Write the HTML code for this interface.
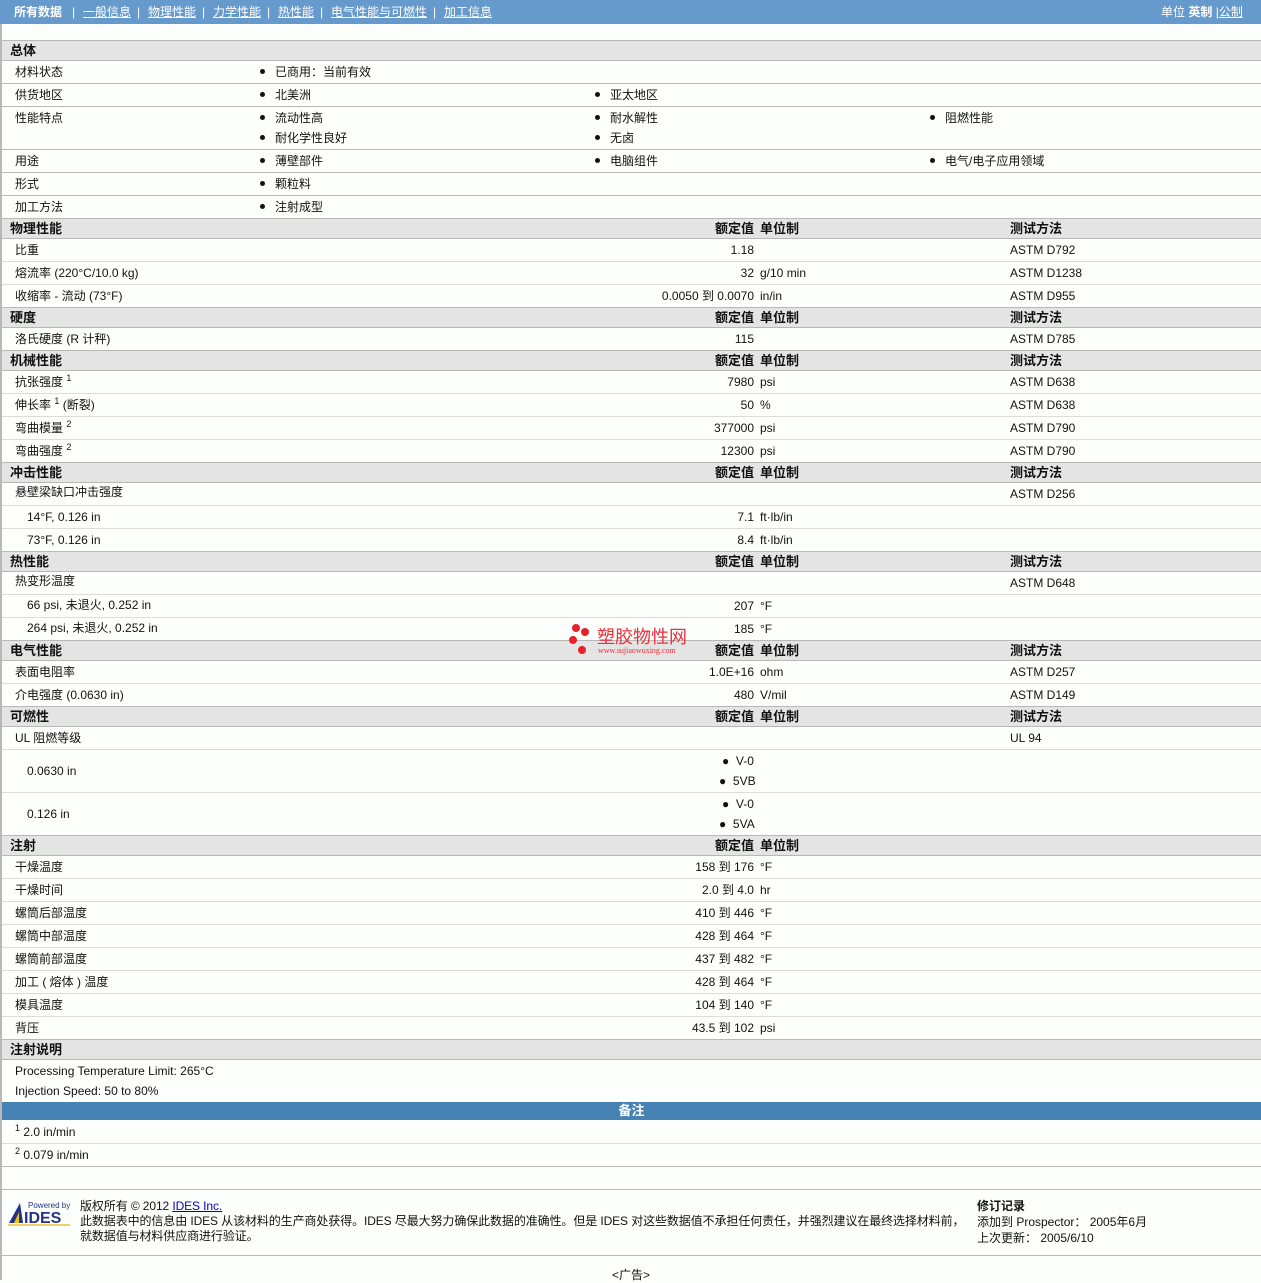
<!DOCTYPE html>
<html><head><meta charset="utf-8">
<style>
*{margin:0;padding:0;box-sizing:border-box}
body{width:1261px;height:1280px;background:#fdfffd;font-family:"Liberation Sans","Noto Sans CJK SC",sans-serif;font-size:12px;color:#111;position:relative;overflow:hidden}
.nav{position:absolute;left:0;top:0;width:1261px;height:24px;background:#6699cc;color:#fff;font-size:12px;line-height:24px}
.nav a{color:#fff;text-decoration:underline}
.lb{position:absolute;left:0;top:24px;width:2px;height:1256px;background:#b8b8b8}
.r{position:absolute;left:2px;width:1259px;border-bottom:1px solid #dcdcdc;line-height:22px}
.s{border-bottom:1px solid #b8b8b8}
.h{background:#e4e4e4;font-weight:bold;font-size:13px;border-top:1px solid #b8b8b8;border-bottom:1px solid #b8b8b8;line-height:19px}
.r span{position:absolute;white-space:nowrap}
.l{left:13px}.l2{left:25px}.hl{left:8px}
.v{right:507px;text-align:right}
.u{left:758px}
.m{left:1008px}
.b{left:258px}.b2{left:593px}.b3{left:928px}
.b:before,.b2:before,.b3:before{content:"";display:inline-block;width:5px;height:5px;border-radius:50%;background:#111;margin-right:10px;vertical-align:2px}
sup{font-size:9px;vertical-align:baseline;position:relative;top:-5px;line-height:0}
</style></head><body>
<div class="nav">
<span style="position:absolute;left:14px;font-weight:bold">所有数据</span>
<span style="position:absolute;left:72px">|</span>
<a style="position:absolute;left:83px">一般信息</a>
<span style="position:absolute;left:137px">|</span>
<a style="position:absolute;left:148px">物理性能</a>
<span style="position:absolute;left:202px">|</span>
<a style="position:absolute;left:213px">力学性能</a>
<span style="position:absolute;left:267px">|</span>
<a style="position:absolute;left:278px">热性能</a>
<span style="position:absolute;left:320px">|</span>
<a style="position:absolute;left:331px">电气性能与可燃性</a>
<span style="position:absolute;left:433px">|</span>
<a style="position:absolute;left:444px">加工信息</a>
<span style="position:absolute;left:1161px">单位 <b>英制</b> |<a>公制</a></span>
</div>
<div class="lb"></div>

<div class="r h" style="top:40px;height:21px"><span class="hl">总体</span></div>
<div class="r s" style="top:61px;height:23px"><span class="l">材料状态</span><span class="b">已商用：当前有效</span></div>
<div class="r s" style="top:84px;height:23px"><span class="l">供货地区</span><span class="b">北美洲</span><span class="b2">亚太地区</span></div>
<div class="r s" style="top:107px;height:43px"><span class="l">性能特点</span><span class="b">流动性高</span><span class="b" style="top:20px">耐化学性良好</span><span class="b2">耐水解性</span><span class="b2" style="top:20px">无卤</span><span class="b3">阻燃性能</span></div>
<div class="r s" style="top:150px;height:23px"><span class="l">用途</span><span class="b">薄壁部件</span><span class="b2">电脑组件</span><span class="b3">电气/电子应用领域</span></div>
<div class="r s" style="top:173px;height:23px"><span class="l">形式</span><span class="b">颗粒料</span></div>
<div class="r" style="top:196px;height:23px"><span class="l">加工方法</span><span class="b">注射成型</span></div>

<div class="r h" style="top:218px;height:21px"><span class="hl">物理性能</span><span class="v">额定值</span><span class="u">单位制</span><span class="m">测试方法</span></div>
<div class="r" style="top:239px;height:23px"><span class="l">比重</span><span class="v">1.18</span><span class="m">ASTM D792</span></div>
<div class="r" style="top:262px;height:23px"><span class="l">熔流率 (220°C/10.0 kg)</span><span class="v">32</span><span class="u">g/10 min</span><span class="m">ASTM D1238</span></div>
<div class="r" style="top:285px;height:23px"><span class="l">收缩率 - 流动 (73°F)</span><span class="v">0.0050 到 0.0070</span><span class="u">in/in</span><span class="m">ASTM D955</span></div>
<div class="r h" style="top:307px;height:21px"><span class="hl">硬度</span><span class="v">额定值</span><span class="u">单位制</span><span class="m">测试方法</span></div>
<div class="r" style="top:328px;height:23px"><span class="l">洛氏硬度 (R 计秤)</span><span class="v">115</span><span class="m">ASTM D785</span></div>
<div class="r h" style="top:350px;height:21px"><span class="hl">机械性能</span><span class="v">额定值</span><span class="u">单位制</span><span class="m">测试方法</span></div>
<div class="r" style="top:371px;height:23px"><span class="l">抗张强度 <sup>1</sup></span><span class="v">7980</span><span class="u">psi</span><span class="m">ASTM D638</span></div>
<div class="r" style="top:394px;height:23px"><span class="l">伸长率 <sup>1</sup> (断裂)</span><span class="v">50</span><span class="u">%</span><span class="m">ASTM D638</span></div>
<div class="r" style="top:417px;height:23px"><span class="l">弯曲模量 <sup>2</sup></span><span class="v">377000</span><span class="u">psi</span><span class="m">ASTM D790</span></div>
<div class="r" style="top:440px;height:23px"><span class="l">弯曲强度 <sup>2</sup></span><span class="v">12300</span><span class="u">psi</span><span class="m">ASTM D790</span></div>
<div class="r h" style="top:462px;height:21px"><span class="hl">冲击性能</span><span class="v">额定值</span><span class="u">单位制</span><span class="m">测试方法</span></div>
<div class="r" style="top:483px;height:23px"><span class="l" style="top:-2px">悬壁梁缺口冲击强度</span><span class="m">ASTM D256</span></div>
<div class="r" style="top:506px;height:23px"><span class="l2">14°F, 0.126 in</span><span class="v">7.1</span><span class="u">ft·lb/in</span></div>
<div class="r" style="top:529px;height:23px"><span class="l2">73°F, 0.126 in</span><span class="v">8.4</span><span class="u">ft·lb/in</span></div>
<div class="r h" style="top:551px;height:21px"><span class="hl">热性能</span><span class="v">额定值</span><span class="u">单位制</span><span class="m">测试方法</span></div>
<div class="r" style="top:572px;height:23px"><span class="l" style="top:-2px">热变形温度</span><span class="m">ASTM D648</span></div>
<div class="r" style="top:595px;height:23px"><span class="l2" style="top:-1px">66 psi, 未退火, 0.252 in</span><span class="v">207</span><span class="u">°F</span></div>
<div class="r" style="top:618px;height:23px"><span class="l2" style="top:-1px">264 psi, 未退火, 0.252 in</span><span class="v">185</span><span class="u">°F</span></div>
<div class="r h" style="top:640px;height:21px"><span class="hl">电气性能</span><span class="v">额定值</span><span class="u">单位制</span><span class="m">测试方法</span></div>
<div class="r" style="top:661px;height:23px"><span class="l">表面电阻率</span><span class="v">1.0E+16</span><span class="u">ohm</span><span class="m">ASTM D257</span></div>
<div class="r" style="top:684px;height:23px"><span class="l">介电强度 (0.0630 in)</span><span class="v">480</span><span class="u">V/mil</span><span class="m">ASTM D149</span></div>
<div class="r h" style="top:706px;height:21px"><span class="hl">可燃性</span><span class="v">额定值</span><span class="u">单位制</span><span class="m">测试方法</span></div>
<div class="r" style="top:727px;height:23px"><span class="l">UL 阻燃等级</span><span class="m">UL 94</span></div>
<div class="r" style="top:750px;height:43px"><span class="l2" style="top:10px">0.0630 in</span><span style="left:720px">●&nbsp; V-0</span><span style="left:717px;top:20px">●&nbsp; 5VB</span></div>
<div class="r" style="top:793px;height:43px"><span class="l2" style="top:10px">0.126 in</span><span style="left:720px">●&nbsp; V-0</span><span style="left:717px;top:20px">●&nbsp; 5VA</span></div>
<div class="r h" style="top:835px;height:21px"><span class="hl">注射</span><span class="v">额定值</span><span class="u">单位制</span></div>
<div class="r" style="top:856px;height:23px"><span class="l">干燥温度</span><span class="v">158 到 176</span><span class="u">°F</span></div>
<div class="r" style="top:879px;height:23px"><span class="l">干燥时间</span><span class="v">2.0 到 4.0</span><span class="u">hr</span></div>
<div class="r" style="top:902px;height:23px"><span class="l">螺筒后部温度</span><span class="v">410 到 446</span><span class="u">°F</span></div>
<div class="r" style="top:925px;height:23px"><span class="l">螺筒中部温度</span><span class="v">428 到 464</span><span class="u">°F</span></div>
<div class="r" style="top:948px;height:23px"><span class="l">螺筒前部温度</span><span class="v">437 到 482</span><span class="u">°F</span></div>
<div class="r" style="top:971px;height:23px"><span class="l">加工 ( 熔体 ) 温度</span><span class="v">428 到 464</span><span class="u">°F</span></div>
<div class="r" style="top:994px;height:23px"><span class="l">模具温度</span><span class="v">104 到 140</span><span class="u">°F</span></div>
<div class="r" style="top:1017px;height:23px"><span class="l">背压</span><span class="v">43.5 到 102</span><span class="u">psi</span></div>
<div class="r h" style="top:1039px;height:21px"><span class="hl">注射说明</span></div>
<div style="position:absolute;left:15px;top:1064px;line-height:14px">Processing Temperature Limit: 265°C</div>
<div style="position:absolute;left:15px;top:1084px;line-height:14px">Injection Speed: 50 to 80%</div>
<div style="position:absolute;left:2px;top:1102px;width:1259px;height:18px;background:#4682b4;color:#fff;font-weight:bold;font-size:13px;text-align:center;line-height:17px">备注</div>
<div class="r" style="top:1121px;height:23px"><span class="l"><sup>1</sup> 2.0 in/min</span></div>
<div class="r s" style="top:1144px;height:23px"><span class="l"><sup>2</sup> 0.079 in/min</span></div>
<div style="position:absolute;left:2px;top:1189px;width:1259px;height:1px;background:#b8b8b8"></div>

<svg style="position:absolute;left:6px;top:1199px" width="66" height="28" viewBox="0 0 66 28">
<text x="22" y="9" font-family="Liberation Sans" font-size="8" fill="#223388">Powered by</text>
<polygon points="3,24 14,4 17,24" fill="#223388"/>
<polygon points="8,24 13,13 13,24" fill="#f0c020"/>
<text x="18" y="24" font-family="Liberation Sans" font-size="16" font-weight="bold" fill="#223388">IDES</text>
<rect x="2" y="25" width="62" height="2" fill="#f0d060"/>
</svg>
<div style="position:absolute;left:80px;top:1199px;line-height:15px;letter-spacing:-0.1px">版权所有 © 2012 <a style="color:#0000cc;text-decoration:underline">IDES Inc.</a><br>此数据表中的信息由 IDES 从该材料的生产商处获得。IDES 尽最大努力确保此数据的准确性。但是 IDES 对这些数据值不承担任何责任，并强烈建议在最终选择材料前，<br>就数据值与材料供应商进行验证。</div>
<div style="position:absolute;left:977px;top:1198px;line-height:16px"><b>修订记录</b><br>添加到 Prospector： 2005年6月<br>上次更新： 2005/6/10</div>
<div style="position:absolute;left:2px;top:1255px;width:1259px;height:1px;background:#b8b8b8"></div>
<div style="position:absolute;left:612px;top:1266px">&lt;广告&gt;</div>

<svg style="position:absolute;left:567px;top:622px" width="130" height="36">
<circle cx="9" cy="6" r="4" fill="#e8202a"/><circle cx="18" cy="10" r="4" fill="#e8202a"/><circle cx="6" cy="18" r="4" fill="#e8202a"/><circle cx="15" cy="28" r="4" fill="#e8202a"/>
<text x="30" y="21" font-family="Noto Sans CJK SC" font-size="18" fill="#e8303a">塑胶物性网</text>
<text x="31" y="31" font-family="Liberation Serif" font-size="8" fill="#e8303a">www.sujiaowuxing.com</text>
</svg>
</body></html>
